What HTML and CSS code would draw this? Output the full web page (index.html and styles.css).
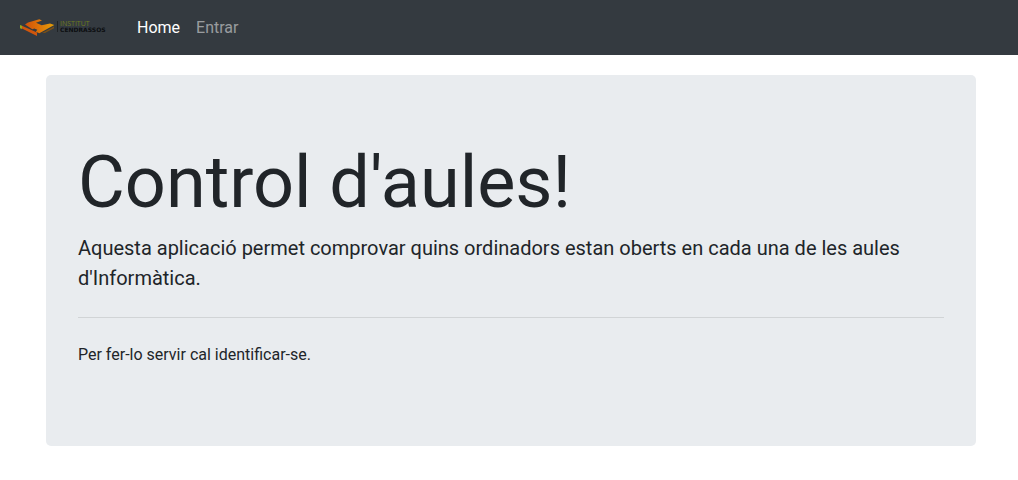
FILE: index.html
```html
<!DOCTYPE html>
<html lang="ca">
<head>
  <meta charset="utf-8">
  <meta name="viewport" content="width=device-width, initial-scale=1">
  <title>Control d'aules</title>
  <link rel="stylesheet" href="styles.css">
</head>
<body>
  <nav class="navbar">
    <a class="brand" href="#" aria-label="Institut Cendrassos">
      <svg class="logo" width="97" height="30" viewBox="0 0 97 30">
        <defs>
          <linearGradient id="flame" x1="0" x2="1">
            <stop offset="0" stop-color="#d0500a"/>
            <stop offset="0.5" stop-color="#dd7508"/>
            <stop offset="1" stop-color="#e5a008"/>
          </linearGradient>
        </defs>
        <path fill="#96a51c" d="M4 12l2 .8v3.200l-2-.8z"/>
        <path fill="#d0560c" d="M6 12.800l15 6.800v3.400L6 15.500z"/>
        <path fill="url(#flame)" d="M9 11.500l3-2 11.300-3.300 2.700 1.300-6 2.200 5.700 2.500 8.300-1.700 4.300 1.500-15 8.300-3.500-1.600 1.500-2-3-1.200-2 .8z"/>
        <path fill="#795019" d="M26 20l12-6.500v1.800l-9 4.700z"/>
        <path fill="#202326" d="M41 8h1v11h-1z"/>
        <text class="logo-top" x="44" y="13">INSTITUT</text>
        <text class="logo-bottom" x="44" y="19">CENDRASSOS</text>
      </svg>
    </a>
    <ul class="menu">
      <li><a class="link active" href="#">Home</a></li>
      <li><a class="link" href="#">Entrar</a></li>
    </ul>
  </nav>
  <main class="container">
    <section class="jumbotron">
      <h1 class="title">Control d'aules!</h1>
      <p class="lead">Aquesta aplicació permet comprovar quins ordinadors estan oberts en cada una de les aules d'Informàtica.</p>
      <hr class="divider">
      <p class="note">Per fer-lo servir cal identificar-se.</p>
    </section>
  </main>
</body>
</html>
```
FILE: styles.css
```css
*,
*::before,
*::after {
  box-sizing: border-box;
}

body {
  margin: 0;
  background: #fff;
  color: #212529;
  font-family: Roboto, "Liberation Sans", sans-serif;
  font-size: 16px;
  line-height: 24px;
}

.navbar {
  display: flex;
  align-items: center;
  gap: 16px;
  min-height: 55px;
  padding: 7px 16px;
  background: #343a40;
}

.brand,
.logo {
  display: block;
}

.logo-top {
  fill: #6e7a20;
  font-family: "Open Sans", "Liberation Sans", sans-serif;
  font-size: 7px;
}

.logo-bottom {
  fill: #0c0e10;
  font-family: "DejaVu Sans", sans-serif;
  font-size: 6px;
  font-weight: 700;
}

.menu {
  display: flex;
  margin: 0;
  padding: 0;
  list-style: none;
}

.link {
  display: block;
  padding: 8px;
  color: rgba(255, 255, 255, 0.5);
  text-decoration: none;
}

.link.active {
  color: #fff;
}

.container {
  padding: 20px 42px 32px 46px;
}

.jumbotron {
  max-width: 930px;
  margin: 0 auto;
  padding: 64px 32px;
  border-radius: 5px;
  background: #e9ecef;
}

.title {
  margin: 0 0 6px;
  font-size: 72px;
  font-weight: 400;
  line-height: 88px;
}

.lead {
  margin: 0 0 16px;
  font-size: 20px;
  line-height: 30px;
}

.divider {
  margin: 24px 0;
  border: 0;
  border-top: 1px solid rgba(0, 0, 0, 0.1);
}

.note {
  margin: 0 0 14px;
  line-height: 26px;
}
```
